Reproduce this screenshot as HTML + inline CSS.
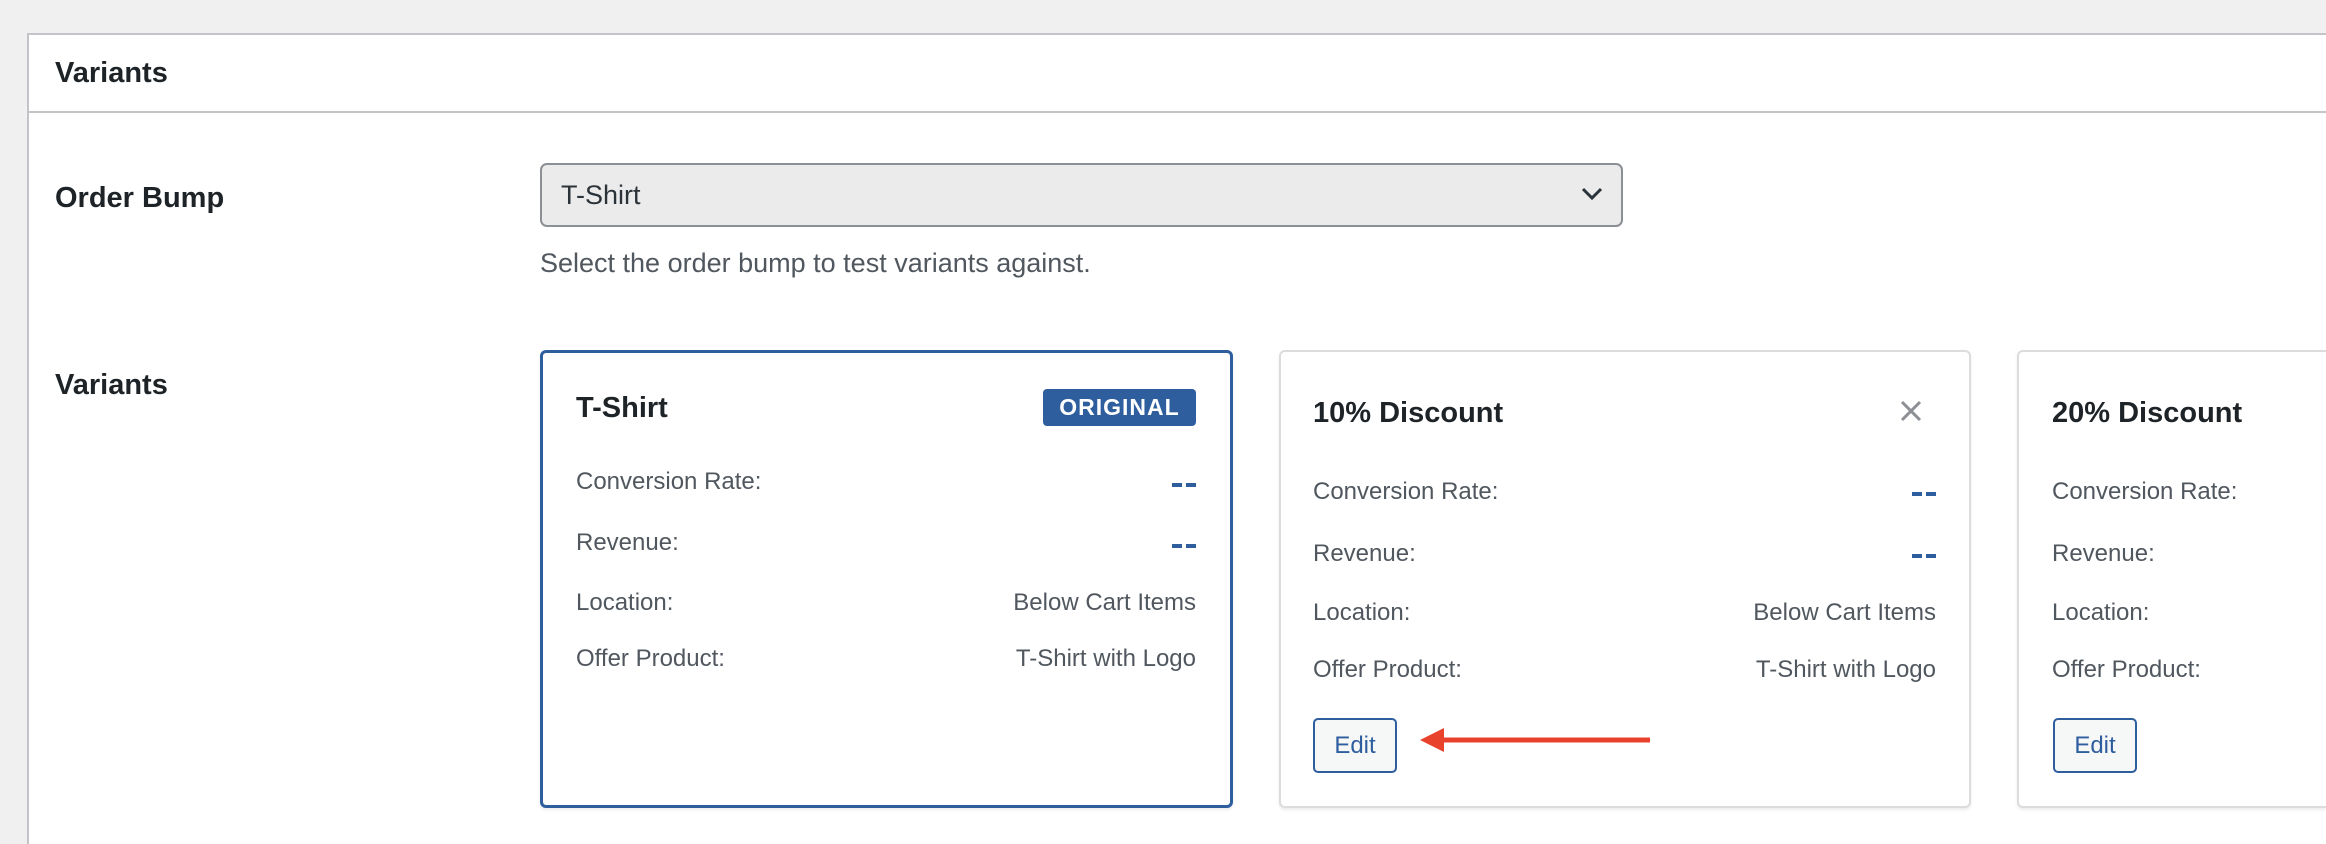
<!DOCTYPE html>
<html><head><meta charset="utf-8"><style>
*{box-sizing:border-box;margin:0;padding:0}
html,body{width:2326px;height:844px;overflow:hidden}
body{background:#f0f0f1;font-family:"Liberation Sans",sans-serif;color:#1d2327;position:relative}
.panel{position:absolute;left:27px;top:33px;width:2299px;height:811px;background:#fff;border:2px solid #c3c4c7;border-right:none;border-bottom:none}
.abs{position:absolute;white-space:nowrap}
.lbl{font-weight:bold;font-size:29px;color:#1d2327}
.select{position:absolute;left:540px;top:163px;width:1083px;height:64px;background:#ebebeb;border:2px solid #8c8f94;border-radius:7px;font-size:27px;color:#2c3338;padding-left:19px;line-height:60px}
.card{position:absolute;top:350px;height:458px;width:692px;background:#fff;border:2px solid #dcdcde;border-radius:6px;box-shadow:0 2px 3px rgba(0,0,0,.08)}
.card.sel{border:3px solid #2e5e9e}
.t{font-weight:bold;font-size:29px;color:#1d2327}
.r{font-size:24px;color:#50575e}
.v{font-size:24px;color:#50575e;text-align:right}
.dash{position:absolute;width:24px;height:4px;background:linear-gradient(90deg,#2e5e9e 0 10px,transparent 10px 14px,#2e5e9e 14px)}
.edit{position:absolute;width:84px;height:55px;border:2px solid #2e5e9e;border-radius:5px;background:#f6f7f7;color:#2e5e9e;font-size:24px;text-align:center;line-height:51px}
</style></head><body>
<div class="panel"></div>
<div class="abs" style="left:27px;top:33px;width:2299px;height:80px;border-bottom:2px solid #c3c4c7"></div>
<div class="abs lbl" style="left:55px;top:57px">Variants</div>
<div class="abs lbl" style="left:55px;top:182px">Order Bump</div>
<div class="select">T-Shirt
<svg style="position:absolute;right:18px;top:22px" width="22" height="14" viewBox="0 0 22 14"><path d="M2 2 L11 11 L20 2" fill="none" stroke="#2c3338" stroke-width="3"/></svg></div>
<div class="abs" style="left:540px;top:248px;font-size:27px;color:#50575e">Select the order bump to test variants against.</div>
<div class="abs lbl" style="left:55px;top:369px">Variants</div>

<div class="card sel" style="left:540px;width:693px"></div>
<div class="abs t" style="left:576px;top:392px">T-Shirt</div>
<div class="abs" style="left:1043px;top:389px;width:153px;height:37px;background:#2e5e9e;border-radius:4px;color:#fff;font-weight:bold;font-size:23px;text-align:center;line-height:37px;letter-spacing:1px">ORIGINAL</div>
<div class="abs r" style="left:576px;top:468px">Conversion Rate:</div><div class="dash" style="left:1172px;top:483px"></div>
<div class="abs r" style="left:576px;top:529px">Revenue:</div><div class="dash" style="left:1172px;top:544px"></div>
<div class="abs r" style="left:576px;top:589px">Location:</div><div class="abs v" style="right:1130px;top:589px">Below Cart Items</div>
<div class="abs r" style="left:576px;top:645px">Offer Product:</div><div class="abs v" style="right:1130px;top:645px">T-Shirt with Logo</div>

<div class="card" style="left:1279px"></div>
<div class="abs t" style="left:1313px;top:397px">10% Discount</div>
<svg class="abs" style="left:1899px;top:399px" width="24" height="24" viewBox="0 0 24 24"><path d="M3 3L21 21M21 3L3 21" stroke="#8c8f94" stroke-width="3"/></svg>
<div class="abs r" style="left:1313px;top:478px">Conversion Rate:</div><div class="dash" style="left:1912px;top:492px"></div>
<div class="abs r" style="left:1313px;top:540px">Revenue:</div><div class="dash" style="left:1912px;top:554px"></div>
<div class="abs r" style="left:1313px;top:599px">Location:</div><div class="abs v" style="right:390px;top:599px">Below Cart Items</div>
<div class="abs r" style="left:1313px;top:656px">Offer Product:</div><div class="abs v" style="right:390px;top:656px">T-Shirt with Logo</div>
<div class="edit" style="left:1313px;top:718px">Edit</div>
<svg class="abs" style="left:1418px;top:726px" width="236" height="28" viewBox="0 0 236 28"><path d="M22 14H232" stroke="#e8412c" stroke-width="5"/><path d="M2 14L26 2V26Z" fill="#e8412c"/></svg>

<div class="card" style="left:2017px;width:309px;border-right:none;border-radius:6px 0 0 6px"></div>
<div class="abs t" style="left:2052px;top:397px">20% Discount</div>
<div class="abs r" style="left:2052px;top:478px">Conversion Rate:</div>
<div class="abs r" style="left:2052px;top:540px">Revenue:</div>
<div class="abs r" style="left:2052px;top:599px">Location:</div>
<div class="abs r" style="left:2052px;top:656px">Offer Product:</div>
<div class="edit" style="left:2053px;top:718px">Edit</div>
</body></html>
